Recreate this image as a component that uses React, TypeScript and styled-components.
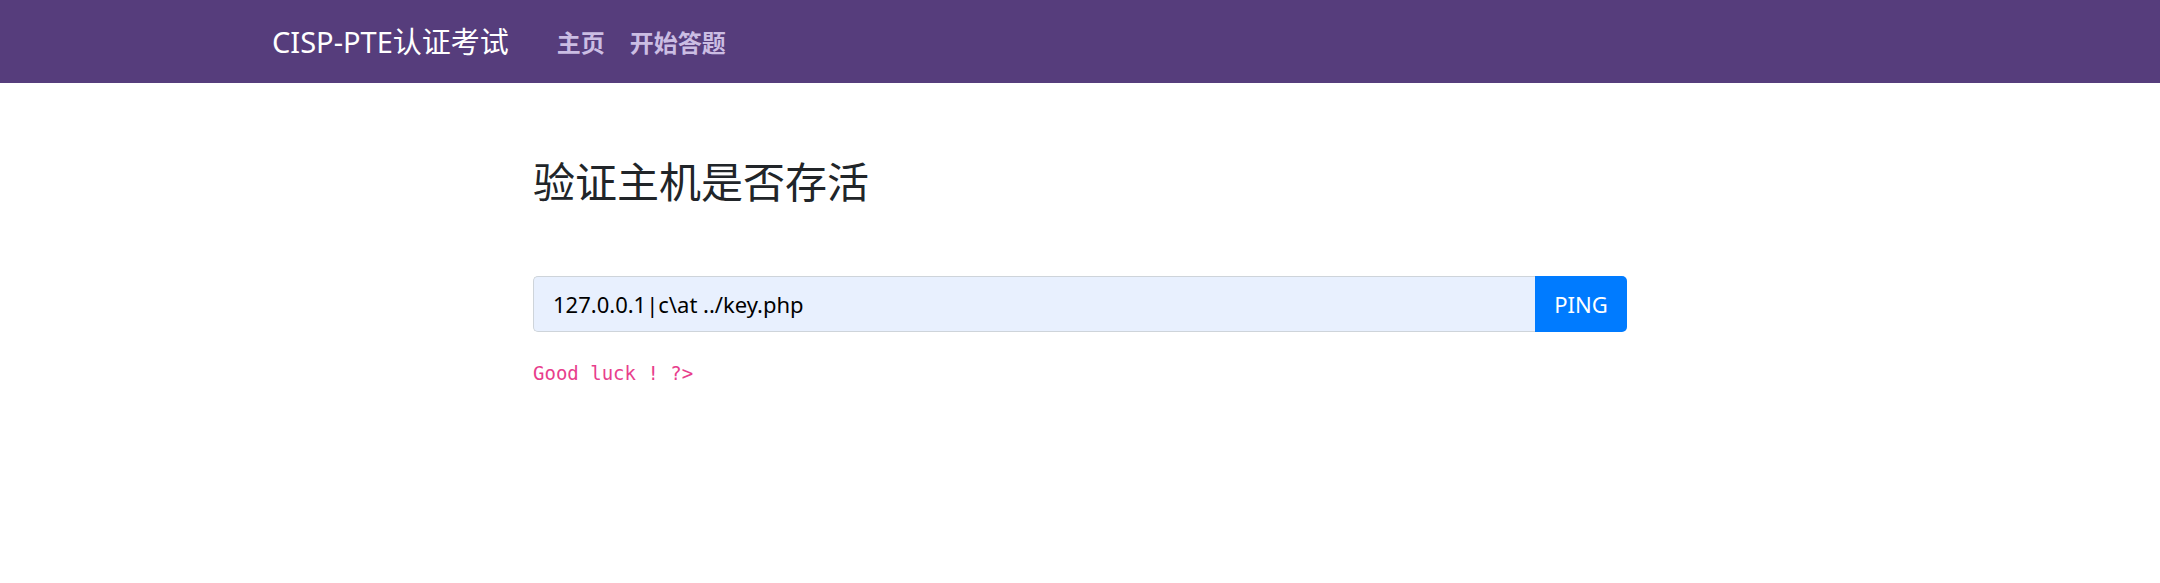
import React from "react";
import styled, { createGlobalStyle } from "styled-components";

const Global = createGlobalStyle`
  html, body { margin: 0; padding: 0; background: #fff; }
  body {
    font-family: "Noto Sans", "Noto Sans CJK SC", sans-serif;
    color: #212529;
  }
  * { box-sizing: border-box; }
`;

const NavBar = styled.nav`
  height: 83px;
  background: #563d7c;
  display: flex;
  align-items: center;
  padding-left: 272px;
`;

const Brand = styled.a`
  color: #fff;
  font-size: 29px;
  font-family: "Noto Sans", "Noto Sans CJK SC", sans-serif;
  text-decoration: none;
  margin-right: 48px;
  line-height: 1;
`;

const NavLinks = styled.div`
  display: flex;
  gap: 25px;
`;

const NavLink = styled.a`
  color: #cbbde3;
  font-weight: 700;
  font-size: 24px;
  text-decoration: none;
  font-family: "Noto Sans CJK SC", sans-serif;
  line-height: 1;
`;

const Main = styled.main`
  width: 1094px;
  margin: 0 auto;
  padding-top: 72px;
`;

const Title = styled.h2`
  margin: 0;
  font-size: 42px;
  font-weight: 400;
  font-family: "Noto Sans CJK SC", sans-serif;
  line-height: 1.2;
  color: #212529;
`;

const Form = styled.form`
  display: flex;
  margin-top: 71px;
`;

const Input = styled.input`
  flex: 1;
  height: 56px;
  background: #e8f0fe;
  border: 1px solid #ced4da;
  border-right: none;
  border-radius: 5px 0 0 5px;
  padding: 0 19px;
  font-size: 22px;
  font-family: "Noto Sans", sans-serif;
  color: #000;
  outline: none;
`;

const Button = styled.button`
  width: 92px;
  height: 56px;
  background: #007bff;
  color: #fff;
  border: none;
  border-radius: 0 5px 5px 0;
  font-size: 22px;
  font-family: "Noto Sans", sans-serif;
`;

const Code = styled.code`
  display: block;
  margin-top: 30px;
  color: #e83e8c;
  font-size: 19px;
  font-family: "DejaVu Sans Mono", monospace;
`;

export default function App() {
  return (
    <>
      <Global />
      <NavBar>
        <Brand href="#">CISP-PTE认证考试</Brand>
        <NavLinks>
          <NavLink href="#">主页</NavLink>
          <NavLink href="#">开始答题</NavLink>
        </NavLinks>
      </NavBar>
      <Main>
        <Title>验证主机是否存活</Title>
        <Form onSubmit={(e) => e.preventDefault()}>
          <Input defaultValue="127.0.0.1|c\at ../key.php" />
          <Button type="submit">PING</Button>
        </Form>
        <Code>Good luck ! ?&gt;</Code>
      </Main>
    </>
  );
}
